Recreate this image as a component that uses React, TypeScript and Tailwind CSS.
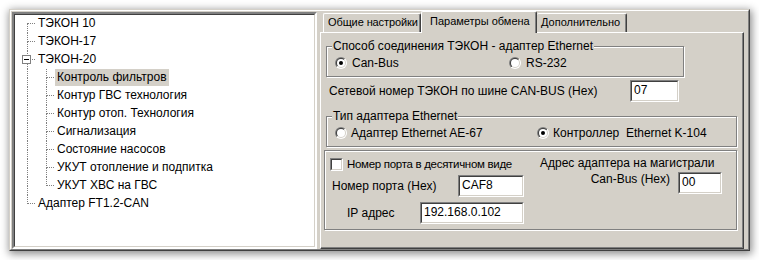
import React from 'react';

type TreeItem = { label: string; level: 1 | 2; selected?: boolean; expanded?: boolean; last?: boolean };

const TREE: TreeItem[] = [
  { label: 'ТЭКОН 10', level: 1 },
  { label: 'ТЭКОН-17', level: 1 },
  { label: 'ТЭКОН-20', level: 1, expanded: true },
  { label: 'Контроль фильтров', level: 2, selected: true },
  { label: 'Контур ГВС технология', level: 2 },
  { label: 'Контур отоп. Технология', level: 2 },
  { label: 'Сигнализация', level: 2 },
  { label: 'Состояние насосов', level: 2 },
  { label: 'УКУТ отопление и подпитка', level: 2 },
  { label: 'УКУТ ХВС на ГВС', level: 2, last: true },
  { label: 'Адаптер FT1.2-CAN', level: 1, last: true },
];

// classic sunken edit box
function Edit({ value, className }: { value: string; className: string }) {
  return (
    <div className={`h-[22px] border border-t-[#808080] border-l-[#808080] border-r-white border-b-white ${className}`}>
      <div className="h-full border border-t-[#404040] border-l-[#404040] border-r-[#d4d0c8] border-b-[#d4d0c8] bg-white pl-[2px] text-[12px] leading-[17px] text-black">
        {value}
      </div>
    </div>
  );
}

function Radio({ checked }: { checked?: boolean }) {
  return (
    <svg width="12" height="12" viewBox="0 0 12 12" className="shrink-0">
      <defs>
        <linearGradient id="rOuter" x1="0" y1="0" x2="1" y2="1">
          <stop offset="0.5" stopColor="#808080" />
          <stop offset="0.5" stopColor="#ffffff" />
        </linearGradient>
        <linearGradient id="rInner" x1="0" y1="0" x2="1" y2="1">
          <stop offset="0.5" stopColor="#404040" />
          <stop offset="0.5" stopColor="#d4d0c8" />
        </linearGradient>
      </defs>
      <circle cx="6" cy="6" r="6" fill="url(#rOuter)" />
      <circle cx="6" cy="6" r="5" fill="url(#rInner)" />
      <circle cx="6" cy="6" r="4" fill="#ffffff" />
      {checked && <circle cx="6" cy="6" r="2" fill="#000000" />}
    </svg>
  );
}

function Checkbox() {
  return (
    <div className="w-[13px] h-[13px] shrink-0 border border-t-[#808080] border-l-[#808080] border-r-white border-b-white">
      <div className="h-full border border-t-[#404040] border-l-[#404040] border-r-[#d4d0c8] border-b-[#d4d0c8] bg-white" />
    </div>
  );
}

function TreeRow({ item, index }: { item: TreeItem; index: number }) {
  const firstRoot = index === 0;
  // level-1 column: line continues through child rows, ends at the last root
  const rootDown = item.level === 2 || !item.last;
  return (
    <div className="flex h-[18px]">
      {/* level-1 connector */}
      <div className="relative flex w-[20px] shrink-0">
        <div className="w-[12px]" />
        <div className="flex w-[8px] flex-col">
          <div
            className={`h-[9px] ${!firstRoot ? 'border-l border-dotted border-[#808080]' : ''} ${
              item.level === 1 ? 'border-b border-dotted border-b-[#808080]' : ''
            }`}
          />
          <div className={`flex-1 ${rootDown ? 'border-l border-dotted border-[#808080]' : ''}`} />
        </div>
        {item.expanded && (
          <div className="absolute left-[7px] top-[4px] flex h-[9px] w-[9px] items-center justify-center border border-[#808080] bg-white">
            <div className="h-px w-[5px] bg-black" />
          </div>
        )}
      </div>
      {/* level-2 connector */}
      {item.level === 2 && (
        <div className="flex w-[19px] shrink-0">
          <div className="w-[11px]" />
          <div className="flex w-[8px] flex-col">
            <div className="h-[9px] border-l border-b border-dotted border-[#808080]" />
            <div className={`flex-1 ${!item.last ? 'border-l border-dotted border-[#808080]' : ''}`} />
          </div>
        </div>
      )}
      <div
        className={`ml-[1px] h-[17px] px-[2px] text-[12px] leading-[17px] whitespace-nowrap text-black ${
          item.selected ? 'bg-[#d4d0c8]' : ''
        }`}
      >
        {item.label}
      </div>
    </div>
  );
}

function Tree() {
  return (
    <div className="ml-[1px] mt-[1px] h-[237px] w-[305px] shrink-0 border-2 border-t-[#808080] border-l-[#808080] border-r-white border-b-white">
      <div className="h-full border border-t-[#404040] border-l-[#404040] border-r-[#d4d0c8] border-b-[#d4d0c8] bg-white">
        {TREE.map((item, i) => (
          <TreeRow key={item.label} item={item} index={i} />
        ))}
      </div>
    </div>
  );
}

function Tabs() {
  return (
    <div className="flex h-[21px] items-end pl-[3px] text-[11px] text-black">
      <div className="h-[19px] w-[98px] rounded-t-[2px] border-t border-l border-r border-t-white border-l-white border-r-[#404040] pl-[4px] leading-[17px] tracking-[-0.1px] shadow-[inset_-1px_0_0_#808080] whitespace-nowrap">
        Общие настройки
      </div>
      <div className="relative z-10 -mb-[1px] h-[22px] w-[116px] rounded-t-[2px] border-t border-l border-r border-t-white border-l-white border-r-[#404040] bg-[#d4d0c8] pl-[8px] leading-[18px] shadow-[inset_-1px_0_0_#808080] whitespace-nowrap">
        Параметры обмена
      </div>
      <div className="h-[19px] w-[90px] rounded-t-[2px] border-t border-r border-t-white border-r-[#404040] pl-[4px] leading-[17px] shadow-[inset_-1px_0_0_#808080] whitespace-nowrap">
        Дополнительно
      </div>
    </div>
  );
}

export default function App() {
  return (
    <div className="h-[260px] w-[759px] overflow-hidden bg-white pl-[9px] pt-[9px] font-['Liberation_Sans',Arial,sans-serif]">
      <div className="h-[242px] w-[741px] border border-t-[#d4d0c8] border-l-[#d4d0c8] border-r-[#404040] border-b-[#404040] bg-[#d4d0c8] shadow-[1px_2px_8px_1px_rgba(0,0,0,0.45)]">
        <div className="flex h-full border border-t-white border-l-white border-r-[#808080] border-b-[#808080]">
          <Tree />

          {/* tab control */}
          <div className="ml-[3px] flex h-[238px] w-[424px] flex-col">
            <Tabs />
            <div className="flex-1 border border-t-white border-l-white border-r-[#404040] border-b-[#404040] shadow-[inset_-1px_-1px_0_#808080] text-[12px] text-black">
              <fieldset className="ml-[5px] mt-[6px] h-[38px] w-[358px] border border-[#808080] shadow-[inset_1px_1px_0_#fff,1px_1px_0_#fff]">
                <legend className="ml-[5px] bg-[#d4d0c8] px-[1px] leading-[15px]">Способ соединения ТЭКОН - адаптер Ethernet</legend>
                <div className="flex h-[18px] items-center pl-[8px]">
                  <div className="flex w-[174px] items-center gap-[5px]">
                    <Radio checked />
                    <span>Can-Bus</span>
                  </div>
                  <div className="flex items-center gap-[5px]">
                    <Radio />
                    <span>RS-232</span>
                  </div>
                </div>
              </fieldset>

              <div className="mt-[3px] flex h-[22px] items-center">
                <div className="w-[309px] pl-[8px] whitespace-nowrap">Сетевой номер ТЭКОН по шине CAN-BUS (Hex)</div>
                <Edit value="07" className="w-[49px]" />
              </div>

              <fieldset className="ml-[5px] mt-[7px] h-[38px] w-[411px] border border-[#808080] shadow-[inset_1px_1px_0_#fff,1px_1px_0_#fff]">
                <legend className="ml-[5px] bg-[#d4d0c8] px-[1px] leading-[15px]">Тип адаптера Ethernet</legend>
                <div className="flex h-[18px] items-center pl-[8px]">
                  <div className="flex w-[202px] items-center gap-[4px]">
                    <Radio />
                    <span>Адаптер Ethernet AE-67</span>
                  </div>
                  <div className="flex items-center gap-[4px]">
                    <Radio checked />
                    <span className="whitespace-pre">Контроллер  Ethernet K-104</span>
                  </div>
                </div>
              </fieldset>

              <div className="ml-[3px] mt-[3px] flex h-[80px] w-[413px] border border-[#808080] shadow-[inset_1px_1px_0_#fff,1px_1px_0_#fff]">
                <div className="w-[205px] shrink-0">
                  <div className="mt-[7px] flex h-[13px] items-center pl-[5px]">
                    <Checkbox />
                    <div className="ml-[4px] w-[166px] overflow-hidden whitespace-nowrap text-[11.5px] leading-[13px] tracking-[-0.3px]">
                      Номер порта в десятичном виде
                    </div>
                  </div>
                  <div className="mt-[4px] flex h-[22px] items-center pl-[7px]">
                    <div className="w-[126px] whitespace-nowrap">Номер порта (Hex)</div>
                    <Edit value="CAF8" className="w-[66px]" />
                  </div>
                  <div className="mt-[5px] flex h-[22px] items-center pl-[22px]">
                    <div className="w-[73px] whitespace-nowrap">IP адрес</div>
                    <Edit value="192.168.0.102" className="w-[104px]" />
                  </div>
                </div>
                <div className="ml-[10px] pt-[5px]">
                  <div className="leading-[15px] whitespace-nowrap">Адрес адаптера на магистрали</div>
                  <div className="mt-[1px] flex items-start">
                    <div className="w-[130px] text-right leading-[15px] whitespace-nowrap">Can-Bus (Hex)</div>
                    <Edit value="00" className="ml-[8px] w-[44px]" />
                  </div>
                </div>
              </div>
            </div>
          </div>
        </div>
      </div>
    </div>
  );
}
